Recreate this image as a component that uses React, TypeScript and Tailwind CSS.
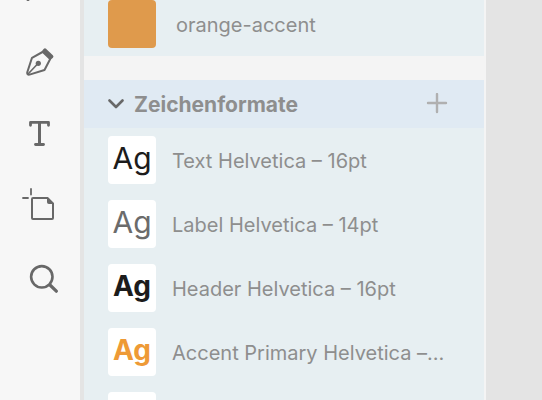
import type { ReactNode } from 'react';

const tools = [
  { name: 'Zeichenstift', icon: <PenIcon /> },
  { name: 'Text', icon: <TextIcon /> },
  { name: 'Zeichenfläche', icon: <ArtboardIcon /> },
  { name: 'Zoom', icon: <ZoomIcon /> },
];

const styles = [
  { name: 'Text Helvetica – 16pt', sample: 'text-[30px] text-[#1c1c1c]' },
  { name: 'Label Helvetica – 14pt', sample: 'text-[30px] text-[#6b6b6b]' },
  { name: 'Header Helvetica – 16pt', sample: 'text-[28px] font-bold text-[#1c1c1c]' },
  { name: 'Accent Primary Helvetica –…', sample: 'text-[28px] font-bold text-[#ee9a36]' },
];

export default function App() {
  return (
    <div className="flex h-screen overflow-hidden bg-[#e4e4e4] font-['Inter',sans-serif] text-xl leading-6 text-[#8e8e8e]">
      <nav className="flex w-21 shrink-0 flex-col border-r-4 border-[#e4e4e4] bg-[#f7f7f7] text-[#686868]">
        <ToolButton label="Linie" className="h-[26px] items-start">
          <svg width="80" height="26" viewBox="0 0 80 26" fill="none" stroke="currentColor" strokeWidth="2" strokeLinecap="round">
            <path d="M27.5 0 H28.5" />
          </svg>
        </ToolButton>
        {tools.map(tool => (
          <ToolButton key={tool.name} label={tool.name} className="h-18 items-center">
            {tool.icon}
          </ToolButton>
        ))}
      </nav>

      <aside className="flex w-[402px] flex-col border-r-2 border-[#f4f4f4] bg-[#e7eff2]">
        <div className="flex h-14 shrink-0 items-start pl-6">
          <button aria-label="orange-accent" className="size-12 shrink-0 rounded bg-[#df9a4c]" />
          <span className="ml-5 pt-[13px]">orange-accent</span>
        </div>
        <div className="h-6 shrink-0 bg-[#f4f4f4]" />

        <header className="flex h-12 shrink-0 items-center justify-between bg-[#e0eaf3] pr-9 pl-6">
          <button className="flex items-center gap-2.5 pt-0.5 text-[21px] font-bold">
            <svg width="16" height="12" viewBox="0 0 16 12" fill="none" stroke="#686868" strokeWidth="2.6" strokeLinecap="round" strokeLinejoin="round">
              <path d="M1.5 1.5 L8 8 L14.5 1.5" />
            </svg>
            Zeichenformate
          </button>
          <button aria-label="Hinzufügen">
            <svg width="22" height="22" viewBox="0 0 22 22" fill="none" stroke="#b0b0b0" strokeWidth="2.4" strokeLinecap="round">
              <path d="M11 1 V19 M2 10 H20" />
            </svg>
          </button>
        </header>

        <ul className="flex flex-col gap-4 pt-2 pr-9 pl-6">
          {styles.map(style => (
            <li key={style.name} className="flex items-center gap-4">
              <Sample className={style.sample}>Ag</Sample>
              <span className="pt-0.5 whitespace-nowrap">{style.name}</span>
            </li>
          ))}
          <li>
            <Sample />
          </li>
        </ul>
      </aside>

      <main className="flex-1" />
    </div>
  );
}

function ToolButton({ label, className, children }: { label: string; className: string; children: ReactNode }) {
  return (
    <button aria-label={label} className={`flex w-full shrink-0 justify-center overflow-hidden ${className}`}>
      {children}
    </button>
  );
}

function Sample({ className = '', children }: { className?: string; children?: ReactNode }) {
  return (
    <div className={`flex size-12 shrink-0 items-center justify-center rounded bg-white pb-1 leading-none ${className}`}>
      {children}
    </div>
  );
}

function PenIcon() {
  return (
    <svg width="36" height="36" viewBox="22 44 36 36" fill="none" stroke="currentColor" strokeLinejoin="round" strokeLinecap="round">
      <path d="M42.5 52 L32 57.8 L27.2 72.5 Q27 75 29.5 74.6 L44.5 70 L50.2 59" strokeWidth="2" />
      <path d="M28.3 73.8 L38 63.5" strokeWidth="1.6" />
      <circle cx="38.3" cy="63.3" r="2.6" fill="currentColor" stroke="none" />
      <path d="M45 50.2 L51.6 56.6 L50 57.8 L43.7 51.7 Z" fill="currentColor" strokeWidth="3.6" />
    </svg>
  );
}

function TextIcon() {
  return (
    <svg width="36" height="36" viewBox="22 116 36 36" fill="none" stroke="currentColor" strokeLinejoin="round" strokeLinecap="round">
      <path d="M30.5 125.3 V122.4 H48.5 V125.3" strokeWidth="2.8" />
      <path d="M39.5 122.5 V144" strokeWidth="3" />
      <path d="M35.5 144.5 H43.5" strokeWidth="2.8" />
    </svg>
  );
}

function ArtboardIcon() {
  return (
    <svg width="36" height="36" viewBox="22 188 36 36" fill="none" stroke="currentColor" strokeLinejoin="round" strokeLinecap="round">
      <path d="M31 189 V194.5 M23 198 H28" strokeWidth="1.8" />
      <path d="M33 198 H47.5 L53 203.5 V218 Q53 219 52 219 H33 Q32 219 32 218 V199 Q32 198 33 198 Z" strokeWidth="2" />
      <path d="M47.5 198 V202.5 Q47.5 203.5 48.5 203.5 H53 Z" fill="currentColor" strokeWidth="1" />
    </svg>
  );
}

function ZoomIcon() {
  return (
    <svg width="36" height="36" viewBox="22 260 36 36" fill="none" stroke="currentColor" strokeLinecap="round">
      <circle cx="41.8" cy="276.8" r="10.7" strokeWidth="2.6" />
      <path d="M50 285 L56.3 291.2" strokeWidth="3.2" />
    </svg>
  );
}
